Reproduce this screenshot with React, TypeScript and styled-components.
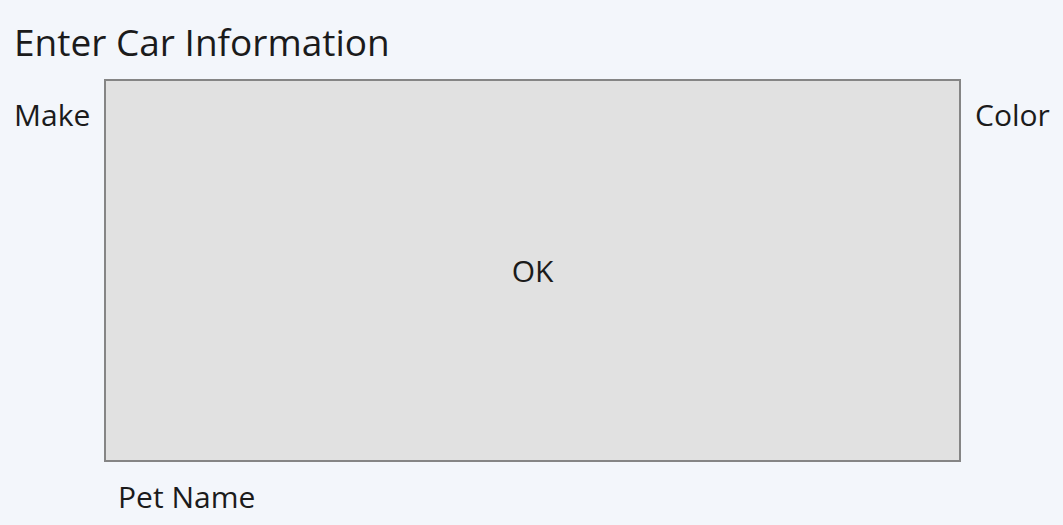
import React from 'react';
import styled, { createGlobalStyle } from 'styled-components';

const GlobalStyle = createGlobalStyle`
  html, body {
    margin: 0;
    padding: 0;
    background: #f3f6fb;
  }
  body {
    font-family: 'Open Sans', 'Noto Sans', sans-serif;
    color: #1b1b1b;
  }
`;

const Window = styled.div`
  width: 1063px;
  height: 525px;
  display: grid;
  grid-template-columns: 104px 857px 1fr;
  grid-template-rows: 79px 383px 1fr;
  background: #f3f6fb;
`;

const Title = styled.div`
  grid-column: 1 / 4;
  padding: 18px 0 0 14px;
  font-size: 37px;
  line-height: 48px;
`;

const Label = styled.div<{ $col: number; $row: number; $pad: string }>`
  grid-column: ${({ $col }) => $col};
  grid-row: ${({ $row }) => $row};
  padding: ${({ $pad }) => $pad};
  font-size: 30px;
  line-height: 40px;
`;

const OkButton = styled.button`
  grid-column: 2;
  grid-row: 2;
  margin: 0;
  border: 2px solid #858585;
  background: #e1e1e1;
  font-family: inherit;
  font-size: 30px;
  color: #1b1b1b;
  display: flex;
  align-items: center;
  justify-content: center;
  padding: 0;
`;

const App = () => {
  return (
    <>
      <GlobalStyle />
      <Window>
        <Title>Enter Car Information</Title>
        <Label $col={1} $row={2} $pad="16px 0 0 14px">Make</Label>
        <OkButton>OK</OkButton>
        <Label $col={3} $row={2} $pad="16px 0 0 14px">Color</Label>
        <Label $col={2} $row={3} $pad="15px 0 0 14px">Pet Name</Label>
      </Window>
    </>
  );
};

export default App;
